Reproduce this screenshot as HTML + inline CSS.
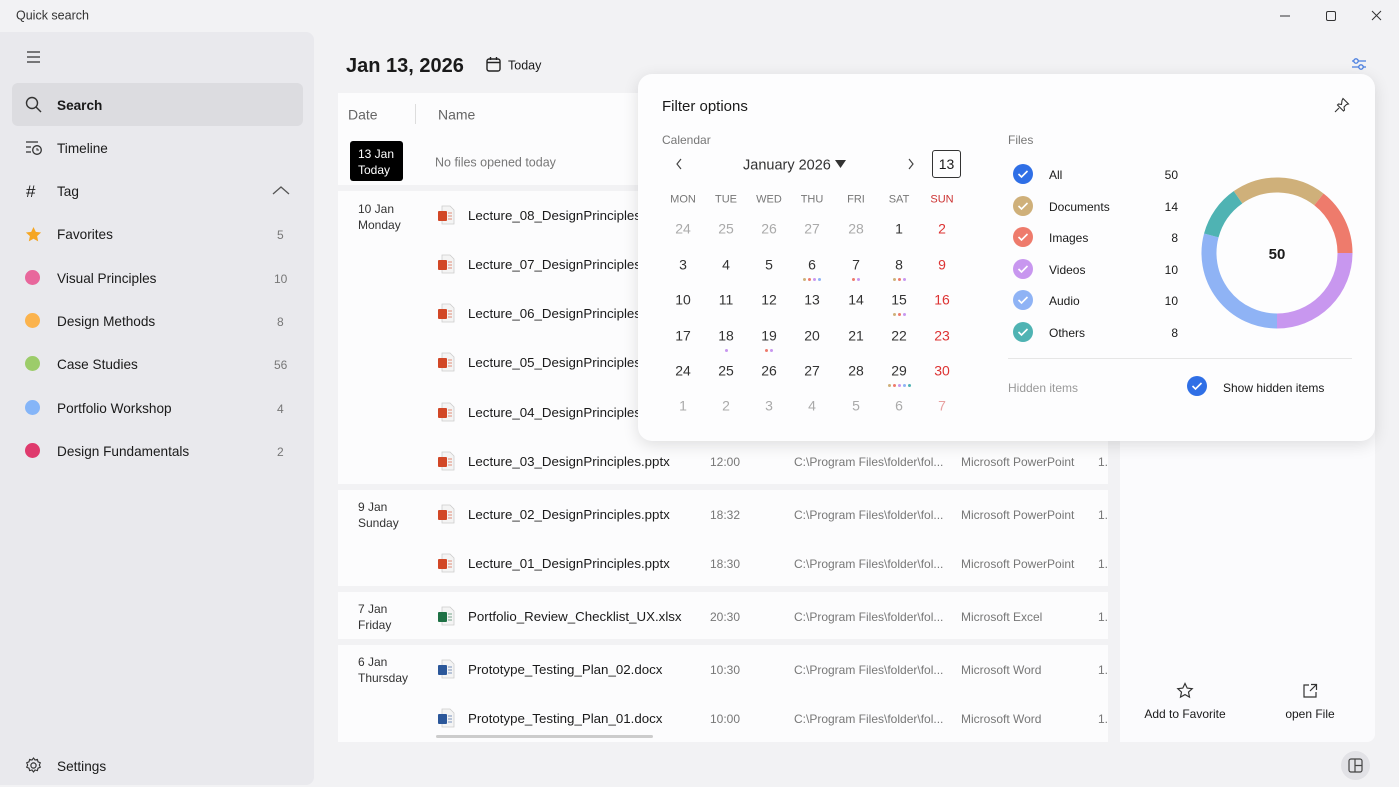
<!DOCTYPE html>
<html><head><meta charset="utf-8"><style>
*{margin:0;padding:0;box-sizing:border-box}
body{width:1399px;height:787px;overflow:hidden;background:#f2f2f4;font-family:"Liberation Sans",sans-serif;color:#1a1a1a;position:relative}
.t{position:absolute;white-space:nowrap;transform:translateY(calc(-50% + 1px));line-height:1.2}
.c{transform:translate(-50%,calc(-50% + 1px))}
.abs{position:absolute}
.g{color:#777}
.dot{position:absolute;width:16px;height:16px;border-radius:50%}
.gp{position:absolute;left:338px;width:770px;background:#fcfcfd}
.sb{font-size:13.6px}
</style></head><body>
<div class="t" style="left:16px;top:15px;font-size:12.5px;color:#333">Quick search</div>
<svg class="abs" style="left:1278px;top:8px" width="110" height="16"><path d="M2 8h10" stroke="#333"/><rect x="48.5" y="3.5" width="9" height="9" rx="1.5" fill="none" stroke="#333"/><path d="M94 3l9 9M103 3l-9 9" stroke="#333"/></svg>

<div class="abs" style="left:0;top:32px;width:314px;height:753px;background:#e9e9ed;border-radius:0 8px 8px 0"></div>
<svg class="abs" style="left:26px;top:50px" width="16" height="14"><path d="M1 2h13M1 7h13M1 12h13" stroke="#333" stroke-width="1.3"/></svg>
<div class="abs" style="left:12px;top:83px;width:291px;height:43px;background:#dcdce0;border-radius:6px"></div>
<svg class="abs" style="left:25px;top:96px" width="18" height="18"><circle cx="7" cy="7" r="5.5" fill="none" stroke="#333" stroke-width="1.4"/><path d="M11 11l5 5" stroke="#333" stroke-width="1.4"/></svg>
<div class="t sb" style="left:57px;top:105px;font-weight:bold">Search</div>
<svg class="abs" style="left:25px;top:140px" width="18" height="16"><path d="M1 2h12M1 7h5M1 12h5" stroke="#333" stroke-width="1.3"/><circle cx="12" cy="10" r="4.3" fill="none" stroke="#333" stroke-width="1.3"/><path d="M12 8v2h2" stroke="#333" fill="none"/></svg>
<div class="t sb" style="left:57px;top:148px">Timeline</div>
<div class="t" style="left:26px;top:191px;font-size:17px">#</div>
<div class="t sb" style="left:57px;top:191px">Tag</div>
<svg class="abs" style="left:272px;top:185px" width="18" height="10"><path d="M1 9l8-7 8 7" fill="none" stroke="#555" stroke-width="1.3"/></svg>
<svg class="abs" style="left:25px;top:226px" width="17" height="17"><path d="M8.5 1l2.3 4.9 5.3.6-4 3.6 1.1 5.3-4.7-2.7-4.7 2.7 1.1-5.3-4-3.6 5.3-.6z" fill="#f5a623"/></svg>
<div class="t sb" style="left:57px;top:234px">Favorites</div><div class="t g" style="left:277px;top:234px;font-size:12px">5</div>
<div class="dot" style="left:25px;top:270px;width:15px;height:15px;background:#e8679c"></div><div class="t sb" style="left:57px;top:278px">Visual Principles</div><div class="t g" style="left:274px;top:278px;font-size:12px">10</div>
<div class="dot" style="left:25px;top:313px;width:15px;height:15px;background:#fbb34d"></div><div class="t sb" style="left:57px;top:321px">Design Methods</div><div class="t g" style="left:277px;top:321px;font-size:12px">8</div>
<div class="dot" style="left:25px;top:356px;width:15px;height:15px;background:#9ccc6a"></div><div class="t sb" style="left:57px;top:364px">Case Studies</div><div class="t g" style="left:274px;top:364px;font-size:12px">56</div>
<div class="dot" style="left:25px;top:400px;width:15px;height:15px;background:#85b5f8"></div><div class="t sb" style="left:57px;top:408px">Portfolio Workshop</div><div class="t g" style="left:277px;top:408px;font-size:12px">4</div>
<div class="dot" style="left:25px;top:443px;width:15px;height:15px;background:#df3a6d"></div><div class="t sb" style="left:57px;top:451px">Design Fundamentals</div><div class="t g" style="left:277px;top:451px;font-size:12px">2</div>
<svg class="abs" style="left:25px;top:757px" width="17" height="17"><circle cx="8.5" cy="8.5" r="2.6" fill="none" stroke="#333" stroke-width="1.2"/><path d="M8.5 1l1.5 2 2.4-.6.6 2.4 2.3 1-1 2.2 1 2.2-2.3 1-.6 2.4-2.4-.6-1.5 2-1.5-2-2.4.6-.6-2.4-2.3-1 1-2.2-1-2.2 2.3-1 .6-2.4 2.4.6z" fill="none" stroke="#333" stroke-width="1.1"/></svg>
<div class="t sb" style="left:57px;top:766px">Settings</div>

<div class="t" style="left:346px;top:65px;font-size:20px;font-weight:bold">Jan 13, 2026</div>
<svg class="abs" style="left:486px;top:57px" width="15" height="15"><rect x="1" y="2" width="13" height="12" rx="2" fill="none" stroke="#222" stroke-width="1.4"/><path d="M1 5.5h13M4.5 0v3M10.5 0v3" stroke="#222" stroke-width="1.4"/></svg>
<div class="t" style="left:508px;top:65px;font-size:12.5px">Today</div>
<svg class="abs" style="left:1351px;top:57px" width="16" height="14"><path d="M1 4h14M1 10h14" stroke="#4a7fe0" stroke-width="1.3"/><circle cx="5" cy="4" r="2.2" fill="#f2f2f4" stroke="#4a7fe0" stroke-width="1.3"/><circle cx="10" cy="10" r="2.2" fill="#f2f2f4" stroke="#4a7fe0" stroke-width="1.3"/></svg>

<div class="gp" style="top:93px;height:92px"></div>
<div class="t" style="left:348px;top:114px;font-size:14px;color:#666">Date</div>
<div class="abs" style="left:415px;top:104px;width:1px;height:20px;background:#ddd"></div>
<div class="t" style="left:438px;top:114px;font-size:14px;color:#666">Name</div>
<div class="abs" style="left:350px;top:141px;width:53px;height:40px;background:#000;border-radius:3px;color:#fff;font-size:12px;line-height:16px;padding:5px 0 0 8px">13 Jan<br>Today</div>
<div class="t" style="left:435px;top:162px;font-size:12.5px;color:#777">No files opened today</div>

<div class="gp" style="top:191px;height:293px"></div>
<div class="gp" style="top:490px;height:96px"></div>
<div class="gp" style="top:592px;height:47px"></div>
<div class="gp" style="top:645px;height:97px"></div>
<div class="abs" style="left:436px;top:735px;width:217px;height:3px;background:#ccc;border-radius:2px"></div>

<div class="abs" style="left:358px;top:201px;font-size:12px;line-height:16px;color:#333">10 Jan<br>Monday</div>
<div class="abs" style="left:358px;top:499px;font-size:12px;line-height:16px;color:#333">9 Jan<br>Sunday</div>
<div class="abs" style="left:358px;top:601px;font-size:12px;line-height:16px;color:#333">7 Jan<br>Friday</div>
<div class="abs" style="left:358px;top:654px;font-size:12px;line-height:16px;color:#333">6 Jan<br>Thursday</div>

<div id="rows"></div>
<script>
var rows=[[215,'p','Lecture_08_DesignPrinciples.pptx'],[264,'p','Lecture_07_DesignPrinciples.pptx'],[313,'p','Lecture_06_DesignPrinciples.pptx'],[362,'p','Lecture_05_DesignPrinciples.pptx'],[412,'p','Lecture_04_DesignPrinciples.pptx'],
[461,'p','Lecture_03_DesignPrinciples.pptx','12:00','Microsoft PowerPoint'],[514,'p','Lecture_02_DesignPrinciples.pptx','18:32','Microsoft PowerPoint'],[563,'p','Lecture_01_DesignPrinciples.pptx','18:30','Microsoft PowerPoint'],
[616,'x','Portfolio_Review_Checklist_UX.xlsx','20:30','Microsoft Excel'],[669,'w','Prototype_Testing_Plan_02.docx','10:30','Microsoft Word'],[718,'w','Prototype_Testing_Plan_01.docx','10:00','Microsoft Word']];
var col={p:'#d24726',x:'#1e7145',w:'#2b579a'},h='';
rows.forEach(function(r){var y=r[0];
h+='<svg class="abs" style="left:437px;top:'+(y-10)+'px" width="18" height="20"><path d="M5 1h8l4 4v14H5z" fill="#f4f4f4" stroke="#ccc" stroke-width=".8"/><rect x="1" y="6" width="9" height="10" rx="1" fill="'+col[r[1]]+'"/><path d="M11 8h4M11 11h4M11 14h4" stroke="'+col[r[1]]+'" stroke-width="1" opacity=".6"/></svg>';
h+='<div class="t" style="left:468px;top:'+y+'px;font-size:13.3px">'+r[2]+'</div>';
if(r[3]){h+='<div class="t g" style="left:710px;top:'+y+'px;font-size:12px">'+r[3]+'</div><div class="t g" style="left:794px;top:'+y+'px;font-size:12px">C:\\Program Files\\folder\\fol...</div><div class="t g" style="left:961px;top:'+y+'px;font-size:12px">'+r[4]+'</div><div class="t g" style="left:1098px;top:'+y+'px;font-size:12px;width:10px;overflow:hidden">1.1</div>';}
});
document.getElementById('rows').innerHTML=h;
</script>

<div class="abs" style="left:1120px;top:93px;width:255px;height:649px;background:#fbfbfd;border-radius:0 0 8px 0"></div>
<svg class="abs" style="left:1176px;top:682px" width="18" height="18"><path d="M9 1.5l2.2 4.6 5 .6-3.7 3.4 1 5-4.5-2.5-4.5 2.5 1-5L1.8 6.7l5-.6z" fill="none" stroke="#333" stroke-width="1.2"/></svg>
<div class="t c" style="left:1185px;top:713px;font-size:12px">Add to Favorite</div>
<svg class="abs" style="left:1302px;top:683px" width="16" height="16"><path d="M7 2H2v12h12V9M9 1.5h5.5V7M14.5 1.5L8 8" fill="none" stroke="#333" stroke-width="1.2"/></svg>
<div class="t c" style="left:1310px;top:713px;font-size:12px">open File</div>
<div class="abs" style="left:1341px;top:751px;width:29px;height:29px;border-radius:50%;background:#e2e2e6"></div>
<svg class="abs" style="left:1348px;top:758px" width="15" height="15"><rect x="1" y="1" width="13" height="13" rx="2" fill="none" stroke="#444" stroke-width="1.2"/><path d="M7 1v13M7 7.5h7" stroke="#444" stroke-width="1.2"/></svg>

<div class="abs" style="left:638px;top:74px;width:737px;height:367px;background:#fdfdfe;border-radius:14px;box-shadow:0 4px 16px rgba(0,0,0,.12)"></div>
<div class="t" style="left:662px;top:106px;font-size:15px">Filter options</div>
<svg class="abs" style="left:1334px;top:97px" width="16" height="16"><path d="M9 1.5l5.5 5.5-2 .5-2.5 2.5.5 3-1 1-6-6 1-1 3 .5L8 3.5z M5 11l-4 4" fill="none" stroke="#333" stroke-width="1.1"/></svg>
<div class="t" style="left:662px;top:139px;font-size:12px;color:#777">Calendar</div>
<div class="t" style="left:1008px;top:139px;font-size:12px;color:#777">Files</div>
<svg class="abs" style="left:675px;top:158px" width="8" height="12"><path d="M6 1L2 6l4 5" fill="none" stroke="#444" stroke-width="1.2"/></svg>
<svg class="abs" style="left:907px;top:158px" width="8" height="12"><path d="M2 1l4 5-4 5" fill="none" stroke="#444" stroke-width="1.2"/></svg>
<div class="t" style="left:743px;top:165px;font-size:14.5px;color:#333">January 2026</div>
<svg class="abs" style="left:835px;top:160px" width="11" height="8"><path d="M0 0h11L5.5 8z" fill="#333"/></svg>
<div class="abs" style="left:932px;top:150px;width:29px;height:28px;border:1.5px solid #333;border-radius:3px;font-size:14px;text-align:center;line-height:27px">13</div>
<div id="cal"></div>
<script>
var xs=[683,726,769,812,856,899,942],h2='',days=['MON','TUE','WED','THU','FRI','SAT','SUN'];
days.forEach(function(d,i){h2+='<div class="t c" style="left:'+xs[i]+'px;top:199px;font-size:11px;color:'+(i==6?'#c33':'#777')+'">'+d+'</div>';});
var ys=[228,264,299,335,370,405];
var grid=[[24,25,26,27,28,1,2],[3,4,5,6,7,8,9],[10,11,12,13,14,15,16],[17,18,19,20,21,22,23],[24,25,26,27,28,29,30],[1,2,3,4,5,6,7]];
grid.forEach(function(r,ri){r.forEach(function(d,i){var out=(ri==0&&i<5)||ri==5;var c=out?(i==6?'#e8a0a0':'#aaa'):(i==6?'#d33':'#333');
h2+='<div class="t c" style="left:'+xs[i]+'px;top:'+ys[ri]+'px;font-size:14px;color:'+c+'">'+d+'</div>';});});
var dots={'1,3':['#cfb07a','#ee7b6c','#c897ef','#8fb3f5'],'1,4':['#ee7b6c','#c897ef'],'1,5':['#cfb07a','#ee7b6c','#c897ef'],'2,5':['#cfb07a','#ee7b6c','#c897ef'],'3,1':['#c897ef'],'3,2':['#ee7b6c','#c897ef'],'4,5':['#cfb07a','#ee7b6c','#c897ef','#8fb3f5','#4fb3b3']};
for(var k in dots){var p=k.split(','),ri=+p[0],ci=+p[1],a=dots[k],w=a.length*5;a.forEach(function(c,j){h2+='<div class="abs" style="left:'+(xs[ci]-w/2+j*5+1)+'px;top:'+(ys[ri]+14)+'px;width:3px;height:3px;border-radius:50%;background:'+c+'"></div>';});}
var fl=[['All',50,'#2f6fe6',174],['Documents',14,'#cfb07a',206],['Images',8,'#ee7b6c',237],['Videos',10,'#c897ef',269],['Audio',10,'#8fb3f5',300],['Others',8,'#4fb3b3',332]];
fl.forEach(function(f){h2+='<svg class="abs" style="left:1013px;top:'+(f[3]-10)+'px" width="20" height="20"><circle cx="10" cy="10" r="10" fill="'+f[2]+'"/><path d="M5.5 10l3 3 6-6" fill="none" stroke="#fff" stroke-width="1.6"/></svg><div class="t" style="left:1049px;top:'+f[3]+'px;font-size:12px">'+f[0]+'</div><div class="t" style="left:1150px;width:28px;text-align:right;top:'+f[3]+'px;font-size:12px">'+f[1]+'</div>';});
document.getElementById('cal').innerHTML=h2;
</script>
<svg class="abs" style="left:1195px;top:171px" width="164" height="164" viewBox="1195 171 164 164">
<g fill="none" stroke-width="15">
<path d="M1238 197.3A68 68 0 0 1 1318.9 199.4" stroke="#cfb07a"/>
<path d="M1318.9 199.4A68 68 0 0 1 1345 253" stroke="#ee7b6c"/>
<path d="M1345 253A68 68 0 0 1 1277 321" stroke="#c897ef"/>
<path d="M1277 321A68 68 0 0 1 1211.3 235.4" stroke="#8fb3f5"/>
<path d="M1211.3 235.4A68 68 0 0 1 1238 197.3" stroke="#4fb3b3"/>
</g></svg>
<div class="t c" style="left:1277px;top:254px;font-size:15px;font-weight:bold">50</div>
<div class="abs" style="left:1008px;top:358px;width:344px;height:1px;background:#e6e6e6"></div>
<div class="t" style="left:1008px;top:387px;font-size:12px;color:#999">Hidden items</div>
<svg class="abs" style="left:1187px;top:376px" width="20" height="20"><circle cx="10" cy="10" r="10" fill="#2f6fe6"/><path d="M5.5 10l3 3 6-6" fill="none" stroke="#fff" stroke-width="1.6"/></svg>
<div class="t" style="left:1223px;top:387px;font-size:12px">Show hidden items</div>
</body></html>
